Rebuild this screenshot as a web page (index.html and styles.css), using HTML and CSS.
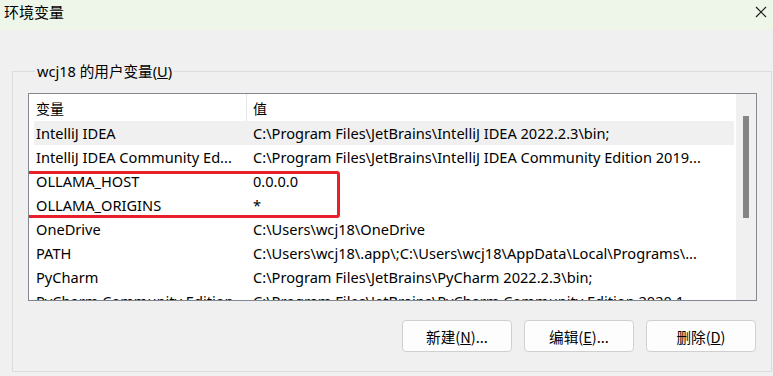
FILE: index.html
```html
<!DOCTYPE html>
<html lang="zh-CN">
<head>
<meta charset="utf-8">
<title>环境变量</title>
<link rel="stylesheet" href="styles.css">
</head>
<body>
<div class="titlebar">
  <span class="title">环境变量</span>
  <svg class="close" width="12" height="12" viewBox="0 0 12 12"><path d="M1 1 L11 11 M11 1 L1 11" stroke="#1a1a1a" stroke-width="1.1" fill="none"/></svg>
</div>
<fieldset class="group">
  <legend class="legend">wcj18 的用户变量(<u>U</u>)</legend>
  <div class="listbox">
    <div class="listcontent">
      <div class="row header"><div class="c1 cjk">变量</div><div class="c2 cjk">值</div></div>
      <div class="row hover"><div class="c1">IntelliJ IDEA</div><div class="c2">C:\Program Files\JetBrains\IntelliJ IDEA 2022.2.3\bin;</div></div>
      <div class="row"><div class="c1">IntelliJ IDEA Community Ed...</div><div class="c2">C:\Program Files\JetBrains\IntelliJ IDEA Community Edition 2019...</div></div>
      <div class="row"><div class="c1">OLLAMA_HOST</div><div class="c2">0.0.0.0</div></div>
      <div class="row"><div class="c1">OLLAMA_ORIGINS</div><div class="c2">*</div></div>
      <div class="row"><div class="c1">OneDrive</div><div class="c2">C:\Users\wcj18\OneDrive</div></div>
      <div class="row"><div class="c1">PATH</div><div class="c2">C:\Users\wcj18\.app\;C:\Users\wcj18\AppData\Local\Programs\...</div></div>
      <div class="row"><div class="c1">PyCharm</div><div class="c2">C:\Program Files\JetBrains\PyCharm 2022.2.3\bin;</div></div>
      <div class="row"><div class="c1">PyCharm Community Edition</div><div class="c2">C:\Program Files\JetBrains\PyCharm Community Edition 2020.1...</div></div>
      <div class="highlight"></div>
    </div>
    <div class="scrollbar"><div class="thumb"></div></div>
  </div>
  <div class="buttons">
    <button class="btn">新建(<u>N</u>)...</button>
    <button class="btn">编辑(<u>E</u>)...</button>
    <button class="btn">删除(<u>D</u>)</button>
  </div>
</fieldset>
</body>
</html>
```

FILE: styles.css
```css
html, body {
  margin: 0;
  padding: 0;
  background: #f0f0f0;
  width: 773px;
  height: 376px;
  overflow: hidden;
  font-family: "Noto Sans", "Noto Sans CJK SC", sans-serif;
  font-size: 14.6px;
  color: #000;
}
.titlebar {
  height: 30px;
  background: #eef6e9;
  display: flex;
  align-items: flex-start;
  justify-content: space-between;
  padding: 0 6px 0 4px;
  box-sizing: border-box;
}
.title {
  font-family: "Noto Sans CJK SC", sans-serif;
  font-size: 15px;
  line-height: 24px;
}
.close {
  margin-top: 6px;
}
.group {
  margin: 32px 1px 0 12px;
  padding: 13px 14px 19px 15px;
  border: 1px solid #dcdcdc;
  height: 310px;
  box-sizing: border-box;
  min-width: 0;
}
.legend {
  margin-left: 7px;
  padding: 0 2px;
  line-height: 18px;
  font-size: 14.6px;
}
.cjk {
  font-family: "Noto Sans CJK SC", sans-serif;
  font-size: 14px;
}
.listbox {
  border: 1px solid #828790;
  height: 208px;
  box-sizing: border-box;
  background: #fff;
  display: flex;
}
.listcontent {
  flex: 1;
  padding: 0 2px 0 5px;
  overflow: hidden;
  position: relative;
}
.row {
  display: flex;
  height: 24px;
  align-items: center;
  white-space: nowrap;
}
.row.header {
  height: 27px;
}
.row.hover {
  background: #f0f0f0;
}
.c1 {
  width: 212px;
  flex: none;
  padding-left: 2px;
  box-sizing: border-box;
  overflow: hidden;
}
.c2 {
  flex: 1;
  padding-left: 7px;
  overflow: hidden;
}
.header .c2 {
  border-left: 1px solid #e5e5e5;
  padding-left: 6px;
  align-self: stretch;
  display: flex;
  align-items: center;
}
.scrollbar {
  width: 20px;
  flex: none;
  background: #f0f0f0;
  display: flex;
  justify-content: center;
  padding-top: 22px;
  box-sizing: border-box;
}
.thumb {
  width: 6px;
  height: 102px;
  background: #858585;
}
.highlight {
  position: absolute;
  left: -6px;
  top: 77px;
  width: 311px;
  height: 41px;
  border: 3px solid #e8202a;
  border-radius: 3px;
}
.buttons {
  display: flex;
  justify-content: flex-end;
  gap: 12px;
  margin-top: 19px;
  padding-right: 1px;
}
.btn {
  width: 110px;
  height: 32px;
  background: #fdfdfd;
  border: 1px solid #d0d0d0;
  border-radius: 4px;
  font-family: "Noto Sans CJK SC", sans-serif;
  font-size: 14.6px;
  color: #000;
  padding: 0;
}
```
